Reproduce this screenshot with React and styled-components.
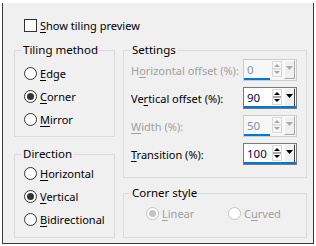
import styled, { createGlobalStyle } from "styled-components"

const Global = createGlobalStyle`
html, body { margin: 0; padding: 0; background: #fff; }
body {
  font-family: "Noto Sans", "Open Sans", sans-serif;
  font-size: 11px;
  color: #000;
}
`

const Window = styled.div`
box-sizing: border-box;
margin: 3px 0 0 2px;
width: 312px;
height: 241px;
background: #f0f0f0;
border: 1px solid #3a3a3a;
border-top: none;
padding: 16px 5px 3px 11px;
`

const CheckRow = styled.label`
display: flex;
align-items: center;
height: 13px;
padding-left: 10px;
gap: 3px;
white-space: nowrap;
`

const CheckBox = styled.span`
box-sizing: border-box;
width: 13px;
height: 13px;
border: 1px solid #333;
background: #fff;
`

const Columns = styled.div`
display: grid;
grid-template-columns: 101px 184px;
column-gap: 8px;
margin-top: 10px;
`

const Column = styled.div`
display: flex;
flex-direction: column;
gap: ${p => p.$gap}px;
`

const Group = styled.fieldset`
box-sizing: border-box;
margin: 0;
min-width: 0;
padding: 0;
height: ${p => p.$h}px;
border: 1px solid #dcdcdc;
`

const Legend = styled.legend`
margin-left: 7px;
padding: 0 1px;
line-height: 16px;
font-size: 11.5px;
`

const Body = styled.div`
display: flex;
flex-direction: ${p => p.$row ? "row" : "column"};
gap: ${p => p.$gap || 0}px;
padding: ${p => p.$pad};
`

const RadioRow = styled.label`
display: flex;
align-items: center;
height: 23px;
gap: 3px;
white-space: nowrap;
color: ${p => p.$disabled ? "#a0a0a0" : "#000"};
width: ${p => p.$w ? p.$w + "px" : "auto"};
`

const Radio = styled.span`
box-sizing: border-box;
position: relative;
flex: none;
width: 13px;
height: 13px;
border-radius: 50%;
border: 1px solid ${p => p.$disabled ? "#c4c4c4" : "#333"};
background: #fff;
&::after {
  content: "";
  display: ${p => p.$checked ? "block" : "none"};
  position: absolute;
  left: 2px;
  top: 2px;
  width: 7px;
  height: 7px;
  border-radius: 50%;
  background: ${p => p.$disabled ? "#c4c4c4" : "#333"};
}
`

const U = styled.span`
text-decoration: underline;
text-underline-offset: 2px;
`

const FieldRow = styled.div`
display: flex;
align-items: center;
justify-content: space-between;
height: 22px;
white-space: nowrap;
color: ${p => p.$disabled ? "#a0a0a0" : "#000"};
`

const SpinBox = styled.div`
box-sizing: border-box;
flex: none;
width: 54px;
height: 22px;
border: 1px solid ${p => p.$disabled ? "#cccccc" : "#7a7a7a"};
background: ${p => p.$disabled ? "#f7f7f7" : "#fff"};
display: flex;
flex-direction: column;
`

const SpinTop = styled.div`
display: flex;
align-items: stretch;
height: 18px;
`

const Value = styled.span`
flex: 1;
padding: 2px 0 0 3px;
line-height: 16px;
font-size: 11.5px;
color: ${p => p.$disabled ? "#8294ad" : "#0a0a3c"};
`

const Arrows = styled.span`
display: flex;
align-items: center;
width: 10px;
margin-right: 2px;
`

const Drop = styled.span`
box-sizing: border-box;
display: flex;
justify-content: center;
padding-top: 5px;
width: 11px;
height: 19px;
margin-right: 1px;
background: #f0f0f0;
border-top: 1px solid #fff;
border-left: 1px solid #fff;
border-right: 1px solid ${p => p.$disabled ? "#a8a8a8" : "#404040"};
border-bottom: 1px solid ${p => p.$disabled ? "#a8a8a8" : "#404040"};
`

const Bar = styled.span`
height: 2px;
width: ${p => p.$full ? "100%" : "50%"};
background: #0078d7;
`

const Spin = ({ value, disabled }) => {
  const c = disabled ? "#a8a8a8" : "#000"
  return (
    <SpinBox $disabled={disabled}>
      <SpinTop>
        <Value $disabled={disabled}>{value}</Value>
        <Arrows>
          <svg width="10" height="16" viewBox="0 0 10 16">
            <rect x="0.5" y="0.5" width="9" height="15" fill="none" stroke="#dadada" />
            <path d="M2 6 L5 3 L8 6 Z" fill={c} />
            <line x1="1" y1="8" x2="9" y2="8" stroke={disabled ? "#c8c8c8" : "#555"} />
            <path d="M2 10 L5 13 L8 10 Z" fill={c} />
          </svg>
        </Arrows>
        <Drop $disabled={disabled}>
          <svg width="7" height="4" viewBox="0 0 7 4">
            <path d="M0 0 L7 0 L3.5 4 Z" fill={c} />
          </svg>
        </Drop>
      </SpinTop>
      <Bar $full={!disabled} />
    </SpinBox>
  )
}

const Option = ({ checked, disabled, w, children }) => (
  <RadioRow $disabled={disabled} $w={w}>
    <Radio $checked={checked} $disabled={disabled} />
    <span>{children}</span>
  </RadioRow>
)

const App = () => {
  return (
    <Window>
      <Global />
      <CheckRow>
        <CheckBox />
        <span><U>S</U>how tiling preview</span>
      </CheckRow>

      <Columns>
        <Column $gap={9}>
          <Group $h={95}>
            <Legend>Tiling method</Legend>
            <Body $pad="4px 0 0 9px">
              <Option><U>E</U>dge</Option>
              <Option checked><U>C</U>orner</Option>
              <Option><U>M</U>irror</Option>
            </Body>
          </Group>
          <Group $h={92}>
            <Legend>Direction</Legend>
            <Body $pad="0 0 0 9px">
              <Option><U>H</U>orizontal</Option>
              <Option checked><U>V</U>ertical</Option>
              <Option><U>B</U>idirectional</Option>
            </Body>
          </Group>
        </Column>

        <Column $gap={7}>
          <Group $h={136}>
            <Legend>Settings</Legend>
            <Body $gap={6} $pad="1px 9px 0 7px">
              <FieldRow $disabled>
                <span>H<U>o</U>rizontal offset (%):</span>
                <Spin value="0" disabled />
              </FieldRow>
              <FieldRow>
                <span>Ve<U>r</U>tical offset (%):</span>
                <Spin value="90" />
              </FieldRow>
              <FieldRow $disabled>
                <span><U>W</U>idth (%):</span>
                <Spin value="50" disabled />
              </FieldRow>
              <FieldRow>
                <span><U>T</U>ransition (%):</span>
                <Spin value="100" />
              </FieldRow>
            </Body>
          </Group>
          <Group $h={53}>
            <Legend>Corner style</Legend>
            <Body $row $pad="1px 0 0 22px">
              <Option checked disabled w={82}><U>L</U>inear</Option>
              <Option disabled>C<U>u</U>rved</Option>
            </Body>
          </Group>
        </Column>
      </Columns>
    </Window>
  )
}

export default App
